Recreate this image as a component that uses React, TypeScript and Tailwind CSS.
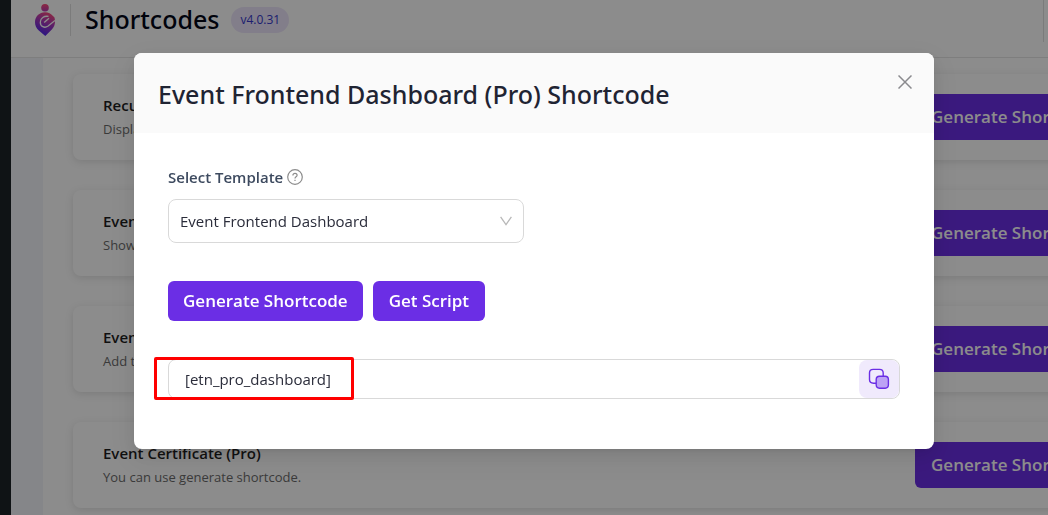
import React, { useState } from 'react';

interface IShortcode {
  title: string;
  description: string;
}

const shortcodes: IShortcode[] = [
  { title: 'Recurring Event (Pro)', description: 'Display recurring events.' },
  { title: 'Event Calendar (Pro)', description: 'Show events in a calendar.' },
  { title: 'Event Ticket Form (Pro)', description: 'Add ticket form to any page.' },
  { title: 'Event Certificate (Pro)', description: 'You can use generate shortcode.' },
];

const Logo: React.FC = () => (
  <svg width="20" height="32" viewBox="0 0 20 32" fill="none" aria-hidden="true">
    <defs>
      <linearGradient id="logo-head" x1="10" y1="0" x2="10" y2="8" gradientUnits="userSpaceOnUse">
        <stop stopColor="#ff4a78" />
        <stop offset="1" stopColor="#b03ab8" />
      </linearGradient>
      <linearGradient id="logo-body" x1="16" y1="9" x2="7" y2="29" gradientUnits="userSpaceOnUse">
        <stop stopColor="#ff4a78" />
        <stop offset="0.45" stopColor="#b03ab8" />
        <stop offset="1" stopColor="#5a28e8" />
      </linearGradient>
    </defs>
    <circle cx="10" cy="3.800" r="3.800" fill="url(#logo-head)" />
    <path
      d="M10 8.200C13.500 8.200 16 9.600 18 12L19.500 13.500C20.600 18.500 20 22 16.800 25.500L10.300 32L3.800 26.500C1.300 24.200 0 21.500 0 18C0 12.500 4.400 8.200 10 8.200Z"
      fill="url(#logo-body)"
    />
    <path
      d="M13.500 12.400C9 11.600 5.300 14.200 5.300 18.200C5.300 22.500 9.500 24.500 12.800 22.300L20 16.400"
      stroke="#fff"
      strokeWidth="1.300"
    />
    <path d="M9.200 18.600L14 14.300" stroke="#fff" strokeWidth="1.300" />
  </svg>
);

const CopyIcon: React.FC = () => (
  <svg width="22" height="22" viewBox="0 0 22 22" fill="none" stroke="#6b2ee5" strokeWidth="1.4" aria-hidden="true">
    <path d="M8 15.200H5.500C2.500 15.200 1.500 14 1.500 11.500V5C1.500 2.500 2.700 1.400 5.200 1.400H11.500C14 1.400 15.200 2.500 15.200 5V8" />
    <path
      d="M11.500 8.200H17.200C19.500 8.200 20.400 9.200 20.400 11.500V16.800C20.400 19.200 19.500 20.200 17.200 20.200H11.500C9.200 20.200 8.200 19.200 8.200 16.800V11.500C8.200 9.200 9.200 8.200 11.500 8.200Z"
      fill="#bda2f5"
    />
  </svg>
);

const HelpIcon: React.FC = () => (
  <svg width="16" height="16" viewBox="0 0 16 16" fill="none" stroke="#8c8c8c" strokeWidth="1.2" aria-hidden="true">
    <circle cx="8" cy="8" r="7.300" />
    <path d="M5.900 6.400C5.900 5.200 6.800 4.400 8 4.400C9.200 4.400 10.100 5.200 10.100 6.300C10.100 7.900 8 7.700 8 9.500" />
    <path d="M8 10.700V12" />
  </svg>
);

const ShortcodeCard: React.FC<IShortcode> = ({ title, description }) => (
  <div className="flex h-[86px] items-center justify-between rounded-lg bg-white px-[30px] shadow-[0_2px_8px_rgba(0,0,0,0.12)]">
    <div>
      <h2 className="text-[15px] leading-6 font-semibold text-[#1e1e1e]">{title}</h2>
      <p className="text-[13px] leading-6 text-[#6b6b6b]">{description}</p>
    </div>
    <button type="button" className="h-[46px] w-[199px] rounded-md bg-[#6b2ee5] px-4 text-left text-[17px] font-semibold text-white">
      Generate Shortcode
    </button>
  </div>
);

const App: React.FC = () => {
  const [template, setTemplate] = useState('dashboard');

  return (
    <div className="flex h-screen overflow-hidden bg-white font-['Open_Sans',sans-serif]">
      <aside className="w-[11px] shrink-0 bg-[#1d2327]" />
      <div className="flex min-w-0 grow flex-col">
        <header className="flex h-[58px] shrink-0 items-start border-b border-[#e5e5e5] pr-1 pl-6">
          <div className="flex h-10 grow items-center">
            <Logo />
            <div className="ml-[15px] h-8 w-px bg-[#e0e0e0]" />
            <h1 className="ml-3.5 font-['Noto_Sans',sans-serif] text-[25px] font-medium text-[#020617]">Shortcodes</h1>
            <span className="ml-3 rounded-full bg-[#ede6fb] px-[9px] text-xs leading-[26px] font-medium text-[#3538cd]">v4.0.31</span>
          </div>
          <div className="h-[42px] w-px bg-[#e0e0e0]" />
        </header>
        <div className="flex min-h-0 grow">
          <div className="w-8 shrink-0 bg-[#f3f5fa]" />
          <main className="-mr-24 flex grow flex-col gap-[30px] pt-4 pl-[30px]">
            {shortcodes.map((item) => (
              <ShortcodeCard key={item.title} {...item} />
            ))}
          </main>
        </div>
      </div>

      <div className="fixed inset-0 flex items-start justify-center bg-black/45 pt-[53px] pl-5">
        <div
          role="dialog"
          aria-labelledby="modal-title"
          className="w-full max-w-[800px] rounded-lg bg-white shadow-[0_6px_16px_rgba(0,0,0,0.08),0_3px_6px_-4px_rgba(0,0,0,0.12),0_9px_28px_8px_rgba(0,0,0,0.05)]"
        >
          <div className="flex h-20 items-start justify-between rounded-t-lg bg-[#fafafa] px-6">
            <h2 id="modal-title" className="font-['Noto_Sans',sans-serif] text-[25px] leading-[82px] font-medium text-[#1f2433]">
              Event Frontend Dashboard (Pro) Shortcode
            </h2>
            <button type="button" aria-label="Close" className="mt-[18px] -mr-1.5 flex size-[22px] items-center justify-center">
              <svg width="14" height="14" viewBox="0 0 14 14" stroke="#8a8a8e" strokeWidth="1.5">
                <path d="M0.500 0.500L13.500 13.500M13.500 0.500L0.500 13.500" />
              </svg>
            </button>
          </div>

          <div className="px-[34px] pt-8 pb-[50px]">
            <div className="mb-2.5 flex h-6 items-center gap-1">
              <label htmlFor="template" className="text-[15px] font-semibold text-[#3d4a5f]">
                Select Template
              </label>
              <HelpIcon />
            </div>
            <div className="relative w-[356px]">
              <select
                id="template"
                value={template}
                onChange={(e) => setTemplate(e.target.value)}
                className="h-11 w-full appearance-none rounded-lg border border-[#d9d9d9] bg-white px-[11px] text-[15px] text-[#2a2c3a]"
              >
                <option value="dashboard">Event Frontend Dashboard</option>
              </select>
              <svg className="pointer-events-none absolute top-[17px] right-3" width="12" height="10" viewBox="0 0 12 10" fill="none" stroke="#b8b8b8" strokeWidth="1.3">
                <path d="M0.600 0.800L6 8.500L11.400 0.800" />
              </svg>
            </div>

            <div className="mt-[38px] flex gap-2.5">
              <button type="button" className="h-10 rounded-md bg-[#6b2ee5] px-[15px] text-[17px] font-semibold text-white">
                Generate Shortcode
              </button>
              <button type="button" className="h-10 rounded-md bg-[#6b2ee5] px-4 text-[17px] font-semibold text-white">
                Get Script
              </button>
            </div>

            <div className="relative mt-[38px] flex h-10 rounded-lg border border-[#d9d9d9]">
              <input
                type="text"
                readOnly
                aria-label="Shortcode"
                value="[etn_pro_dashboard]"
                className="min-w-0 grow rounded-l-lg px-4 text-[15px] text-[#2a2c3a] outline-none"
              />
              <button type="button" aria-label="Copy shortcode" className="flex w-10 items-center justify-center rounded-lg bg-[#f0eafc]">
                <CopyIcon />
              </button>
              <div className="pointer-events-none absolute -top-[3px] -left-[15px] h-[43px] w-[200px] rounded-xs border-3 border-[#ff0000]" />
            </div>
          </div>
        </div>
      </div>
    </div>
  );
};

export default App;
